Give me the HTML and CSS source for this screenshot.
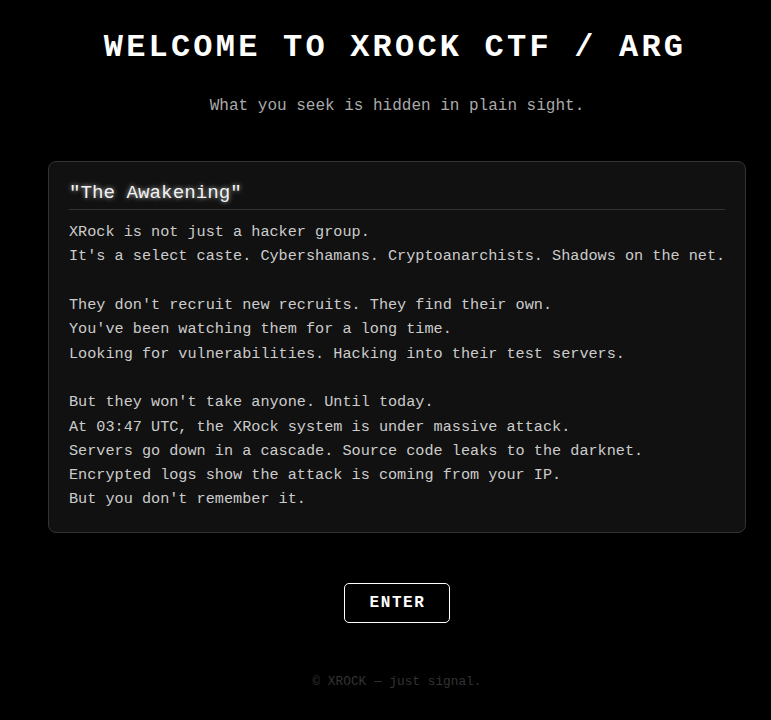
FILE: index.html
```html
<!DOCTYPE html>
<html lang="en">
<head>
<meta charset="utf-8">
<title>XROCK CTF / ARG</title>
<link rel="stylesheet" href="styles.css">
</head>
<body>
<div class="page">
  <main class="container">
    <h1 class="title">WELCOME TO XROCK CTF / ARG</h1>
    <p class="subtitle">What you seek is hidden in plain sight.</p>
    <section class="card">
      <h2 class="card-title">"The Awakening"</h2>
      <div class="story">
        <p>XRock is not just a hacker group.<br>It's a select caste. Cybershamans. Cryptoanarchists. Shadows on the net.</p>
        <p>They don't recruit new recruits. They find their own.<br>You've been watching them for a long time.<br>Looking for vulnerabilities. Hacking into their test servers.</p>
        <p>But they won't take anyone. Until today.<br>At 03:47 UTC, the XRock system is under massive attack.<br>Servers go down in a cascade. Source code leaks to the darknet.<br>Encrypted logs show the attack is coming from your IP.<br>But you don't remember it.</p>
      </div>
    </section>
    <div class="actions">
      <button class="enter">ENTER</button>
    </div>
    <footer class="footer">© XROCK — just signal.</footer>
  </main>
</div>
</body>
</html>
```

FILE: styles.css
```css
html, body {
  margin: 0;
  padding: 0;
  background: #000;
}

body {
  font-family: "Liberation Mono", "DejaVu Sans Mono", monospace;
  color: #ccc;
}

.page {
  padding: 29px 0 0 48px;
}

.container {
  width: 698px;
  display: flex;
  flex-direction: column;
  align-items: stretch;
}

.title {
  margin: 0;
  padding-right: 4px;
  font-size: 32px;
  font-weight: bold;
  letter-spacing: 0.1em;
  color: #fff;
  text-align: center;
  white-space: nowrap;
}

.subtitle {
  margin: 31px 0 0;
  font-size: 16px;
  color: #aaa;
  text-align: center;
}

.card {
  margin-top: 46px;
  background: #111;
  border: 1px solid #333;
  border-radius: 8px;
  padding: 20px;
}

.card-title {
  margin: 0;
  padding-bottom: 5px;
  border-bottom: 1px solid #333;
  font-size: 19.2px;
  font-weight: normal;
  color: #f2f2f2;
  text-shadow: 0 0 5px rgba(255, 255, 255, 0.7);
}

.story {
  margin-top: 10px;
  font-size: 15.2px;
  line-height: 1.6;
  color: #ccc;
  white-space: nowrap;
}

.story p {
  margin: 0 0 1.6em;
}

.story p:last-child {
  margin-bottom: 0;
}

.actions {
  margin-top: 50px;
  display: flex;
  justify-content: center;
}

.enter {
  font-family: "Liberation Mono", "DejaVu Sans Mono", monospace;
  font-size: 16px;
  font-weight: bold;
  letter-spacing: 0.1em;
  color: #fff;
  background: #000;
  border: 1px solid #fff;
  border-radius: 5px;
  padding: 10px 23px 10px 24px;
  cursor: pointer;
}

.footer {
  margin-top: 51px;
  font-size: 12.8px;
  color: #333;
  text-align: center;
}
```
